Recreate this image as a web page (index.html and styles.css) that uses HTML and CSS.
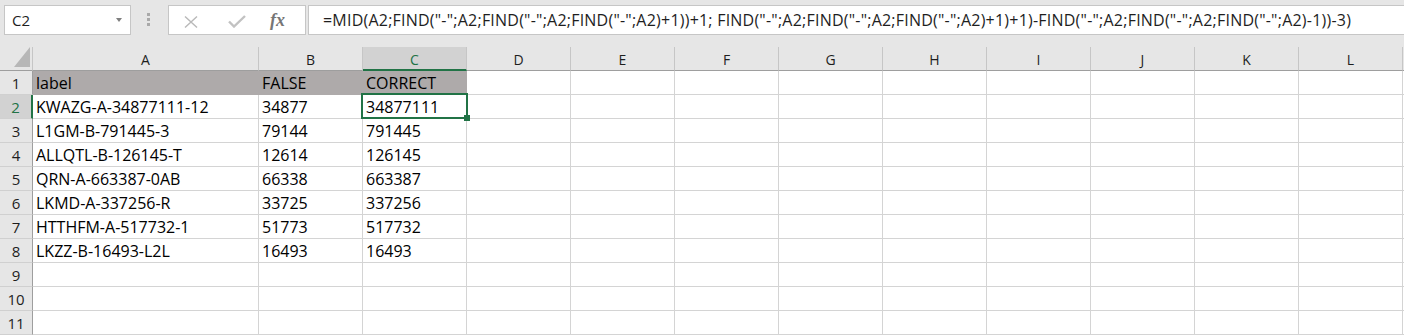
FILE: index.html
```html
<!DOCTYPE html>
<html lang="en">
<head>
    <meta charset="UTF-8">
    <meta name="viewport" content="width=device-width, initial-scale=1.0">
    <title>Sheet1</title>
    <link rel="stylesheet" href="styles.css">
</head>
<body>

<div class="toolbar">
    <div class="name-box">
        <span>C2</span>
        <span class="caret"></span>
    </div>
    <div class="grip"><i></i><i></i><i></i></div>
    <div class="fx-box">
        <svg class="cancel" width="14" height="12" viewBox="0 0 14 12">
            <path d="M1 0.5 L13 11.5 M13 0.5 L1 11.5" stroke="#b9b9b9" stroke-width="1.4" fill="none"/>
        </svg>
        <svg class="enter" width="18" height="13" viewBox="0 0 18 13">
            <path d="M1 6.5 L6 11.5 L17 1" stroke="#c2c2c2" stroke-width="2.4" fill="none"/>
        </svg>
        <span class="fx">fx</span>
    </div>
    <div class="formula">=MID(A2;FIND("-";A2;FIND("-";A2;FIND("-";A2)+1))+1; FIND("-";A2;FIND("-";A2;FIND("-";A2)+1)+1)-FIND("-";A2;FIND("-";A2;FIND("-";A2)-1))-3)</div>
</div>

<div class="sheet" id="sheet"></div>

<script>
    const sheet = document.getElementById('sheet');
    const cols = ['A', 'B', 'C', 'D', 'E', 'F', 'G', 'H', 'I', 'J', 'K', 'L'];

    // Rows of the sheet, empty arrays are blank rows
    const rows = [
        ['label', 'FALSE', 'CORRECT'],
        ['KWAZG-A-34877111-12', '34877', '34877111'],
        ['L1GM-B-791445-3', '79144', '791445'],
        ['ALLQTL-B-126145-T', '12614', '126145'],
        ['QRN-A-663387-0AB', '66338', '663387'],
        ['LKMD-A-337256-R', '33725', '337256'],
        ['HTTHFM-A-517732-1', '51773', '517732'],
        ['LKZZ-B-16493-L2L', '16493', '16493'],
        [],
        [],
        []
    ];

    function addCell(cls, text) {
        const div = document.createElement('div');
        div.className = cls;
        if (text !== undefined) div.textContent = text;
        sheet.appendChild(div);
        return div;
    }

    // Corner with the select-all triangle
    const corner = addCell('corner');
    corner.innerHTML = '<svg width="16" height="20" viewBox="0 0 16 20"><polygon points="16,0 16,20 0,20" fill="#b7b7b7"/></svg>';

    // Column headers
    cols.forEach(c => addCell(c === 'C' ? 'col-head active' : 'col-head', c));
    addCell('col-head filler');

    // Body rows
    rows.forEach((row, i) => {
        addCell(i === 1 ? 'row-head active' : 'row-head', i + 1);
        cols.forEach((c, j) => {
            let cls = 'cell';
            if (i === 0 && j < 3) cls += ' shaded';
            if (i === 1 && j === 2) cls += ' selected';
            addCell(cls, row[j] || '');
        });
        addCell('cell filler');
    });
</script>

</body>
</html>
```

FILE: styles.css
```css
body {
    margin: 0;
    padding: 0;
    background-color: #ffffff;
    font-family: "Open Sans", sans-serif;
    overflow: hidden;
}

/* formula bar */
.toolbar {
    display: flex;
    align-items: flex-start;
    height: 47px;
    padding-top: 5px;
    box-sizing: border-box;
    background-color: #e6e6e6;
}
.name-box {
    display: flex;
    align-items: center;
    justify-content: space-between;
    margin-left: 4px;
    width: 127px;
    height: 30px;
    box-sizing: border-box;
    padding: 0 8px 0 7px;
    border: 1px solid #c6c6c6;
    background-color: #ffffff;
    font-size: 15px;
    color: #1e1e1e;
}
.caret {
    width: 0;
    height: 0;
    border-left: 3.5px solid transparent;
    border-right: 3.5px solid transparent;
    border-top: 4px solid #7f7f7f;
}
.grip {
    display: flex;
    flex-direction: column;
    gap: 2px;
    width: 37px;
    padding: 8px 0 0 16px;
    box-sizing: border-box;
}
.grip i {
    width: 3px;
    height: 3px;
    background-color: #a9a9a9;
}
.fx-box {
    display: flex;
    align-items: center;
    width: 138px;
    height: 30px;
    box-sizing: border-box;
    padding: 3px 0 0 15px;
    border: 1px solid #c6c6c6;
    background-color: #ffffff;
}
.cancel {
    margin-right: 30px;
}
.enter {
    margin-right: 24px;
}
.fx {
    font-family: "Liberation Serif", serif;
    font-style: italic;
    font-weight: bold;
    font-size: 18px;
    color: #767676;
    margin-top: -3px;
}
.formula {
    flex: 1;
    margin-left: 2px;
    height: 30px;
    box-sizing: border-box;
    padding-left: 14px;
    border: 1px solid #c6c6c6;
    border-right: none;
    background-color: #ffffff;
    font-size: 16px;
    letter-spacing: 0.22px;
    line-height: 28px;
    white-space: nowrap;
    overflow: hidden;
    color: #1e1e1e;
}

/* grid */
.sheet {
    display: grid;
    grid-template-columns: 33px 226px repeat(11, 104px) 1fr;
    grid-auto-rows: 24px;
    background-color: #e6e6e6;
}
.sheet div {
    box-sizing: border-box;
    border-right: 1px solid #d4d4d4;
    border-bottom: 1px solid #d4d4d4;
    white-space: nowrap;
    overflow: hidden;
}
.sheet .corner {
    display: flex;
    justify-content: flex-end;
    align-items: flex-end;
    padding: 0 2px 3px 0;
    background-color: #e6e6e6;
    border-right-color: #c6c6c6;
    border-bottom-color: #9e9e9e;
}
.corner svg {
    display: block;
}
.sheet .col-head {
    background-color: #e6e6e6;
    border-right-color: #c6c6c6;
    border-bottom-color: #9e9e9e;
    text-align: center;
    font-size: 14px;
    line-height: 22px;
    padding-top: 2px;
    color: #1e1e1e;
}
.sheet .col-head.active {
    background-color: #d2d2d2;
    color: #217346;
    border-bottom: 2px solid #217346;
}
.sheet .row-head {
    background-color: #e6e6e6;
    border-right-color: #9e9e9e;
    border-bottom-color: #d0d0d0;
    text-align: center;
    font-size: 15px;
    line-height: 22px;
    padding-top: 1px;
    color: #1e1e1e;
}
.sheet .row-head.active {
    background-color: #d2d2d2;
    color: #217346;
    border-right: 2px solid #217346;
}
.sheet .cell {
    background-color: #ffffff;
    padding: 1px 3px 0;
    font-size: 16px;
    line-height: 22px;
    color: #000000;
}
.sheet .cell.shaded {
    background-color: #aeaaaa;
    border-color: #aeaaaa;
}
.sheet .cell.selected {
    position: relative;
    overflow: visible;
}
.cell.selected::after {
    content: '';
    position: absolute;
    left: -2px;
    top: -2px;
    right: -2px;
    bottom: -1px;
    border: 2px solid #217346;
}
.cell.selected::before {
    content: '';
    position: absolute;
    right: -4px;
    bottom: -3px;
    width: 6px;
    height: 6px;
    background-color: #217346;
    z-index: 1;
}
```
